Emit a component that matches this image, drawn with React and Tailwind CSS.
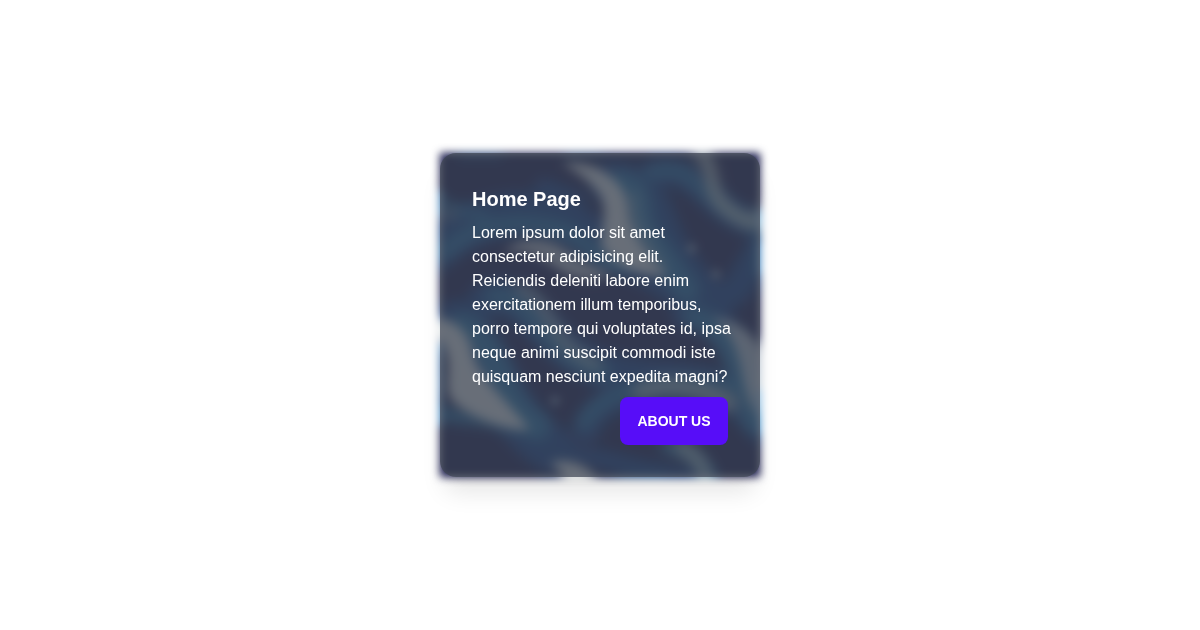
function WavesArt() {
  return (
    <svg
      viewBox="60 69 960 972"
      preserveAspectRatio="none"
      className="absolute inset-0 h-full w-full blur-xs"
      aria-hidden="true"
    >
      <defs>
        <filter id="soft" x="-20%" y="-20%" width="140%" height="140%">
          <feGaussianBlur stdDeviation="16" />
        </filter>
        <filter id="crest" x="-20%" y="-20%" width="140%" height="140%">
          <feGaussianBlur stdDeviation="11" />
        </filter>
        <clipPath id="frame">
          <rect x="60" y="69" width="960" height="972" />
        </clipPath>
      </defs>
      <g clipPath="url(#frame)">
        <rect x="60" y="69" width="960" height="972" fill="#131548" />

        {/* deep blue swells */}
        <g filter="url(#soft)" fill="none" stroke="#0a3a84" strokeLinecap="round">
          <path d="M30 370C160 250 330 210 480 300S700 400 860 520" strokeWidth="130" />
          <path d="M580 160C710 170 690 290 760 390S850 490 880 520" strokeWidth="130" />
          <path d="M700 130C850 100 860 260 1040 290" strokeWidth="80" />
          <path d="M200 510C330 460 360 660 560 720S830 700 1020 860" strokeWidth="110" />
          <path d="M110 580C230 660 230 860 400 960" strokeWidth="140" />
          <path d="M500 900C520 820 640 750 900 800" strokeWidth="80" />
          <path d="M800 550C930 560 1000 700 1030 900" strokeWidth="90" />
          <path d="M400 980C560 960 660 1050 860 1040" strokeWidth="60" />
          <path d="M950 480L1030 350" strokeWidth="90" />
          <path d="M370 170L470 210" strokeWidth="50" />
        </g>

        {/* brighter water */}
        <g filter="url(#soft)" fill="none" stroke="#1c70a8" strokeLinecap="round">
          <path d="M50 200C90 250 150 240 190 260" strokeWidth="26" />
          <path d="M70 370C160 280 270 270 390 290S510 400 620 410" strokeWidth="44" />
          <path d="M600 160C690 180 630 260 690 330S760 430 800 480" strokeWidth="74" />
          <path d="M690 130C850 80 820 240 1040 290" strokeWidth="34" />
          <path d="M220 500C340 480 340 660 550 730" strokeWidth="50" />
          <path d="M130 590C250 660 210 790 350 890" strokeWidth="80" />
          <path d="M490 880C540 800 650 750 850 760S950 870 1030 890" strokeWidth="40" />
          <path d="M820 560C930 590 950 700 1000 880" strokeWidth="60" />
          <path d="M60 850C150 870 210 860 300 890" strokeWidth="40" />
          <path d="M740 950C820 960 850 1000 870 1050" strokeWidth="40" />
          <path d="M1020 320V430" strokeWidth="24" />
          <path d="M120 70H240M440 65H540M600 1045H730" strokeWidth="16" />
        </g>

        {/* foam crests */}
        <g fill="#e6ecec" filter="url(#crest)">
          <path d="M425 98C550 90 630 170 626 250C635 310 680 370 745 440C660 438 580 410 545 350C540 290 575 230 530 180C500 145 470 125 425 98Z" />
          <path d="M250 370C290 325 350 320 410 345C450 370 490 400 580 435C510 465 440 445 390 400C340 370 310 360 250 370Z" opacity=".8" />
          <path d="M30 560C120 565 150 620 160 680C180 745 270 820 330 900C250 900 140 860 95 810C65 770 100 720 75 660C65 630 50 620 30 610Z" />
          <path d="M875 560C975 575 1010 630 1050 690V890C1000 860 975 790 965 720C950 650 930 600 875 560Z" opacity=".8" />
          <path d="M390 1000C440 980 510 1005 540 1060H440C430 1030 410 1015 390 1000Z" />
        </g>
        <g fill="none" stroke="#b8c8c8" strokeLinecap="round" filter="url(#soft)">
          <path d="M825 50C900 110 850 180 920 235S990 270 1040 280" strokeWidth="36" />
          <path d="M300 475C400 520 380 640 530 705" strokeWidth="32" opacity=".75" />
          <path d="M660 785C740 755 830 765 930 820" strokeWidth="46" opacity=".85" />
          <path d="M780 950C830 970 850 1010 860 1050" strokeWidth="36" opacity=".9" />
          <path d="M640 200C630 290 690 340 720 410" strokeWidth="34" opacity=".4" />
          <path d="M55 255H100" strokeWidth="20" opacity=".6" />
          <path d="M1020 230V270" strokeWidth="18" />
        </g>

        {/* light on the side edges */}
        <g fill="none" stroke="#4aa9f0" strokeWidth="10">
          <path d="M62 180V260M62 640V890M1018 240V290M1018 340V430M1018 780V910" />
        </g>

        {/* stars */}
        <g fill="#5a6d94">
          <circle cx="815" cy="355" r="17" />
          <circle cx="888" cy="432" r="16" />
          <circle cx="405" cy="812" r="16" />
        </g>
      </g>
    </svg>
  )
}

export default function App() {
  return (
    <main className="flex min-h-screen items-center justify-center bg-white font-['Liberation_Sans',Arial,sans-serif]">
      <div className="relative w-80 rounded-2xl shadow-xl">
        <WavesArt />
        <div className="absolute inset-0 rounded-2xl bg-[#3d4451]/75" />
        <div className="relative flex flex-col gap-2 p-8 text-white">
          <h2 className="text-xl font-semibold">Home Page</h2>
          <p className="-mr-2 text-base">
            Lorem ipsum dolor sit amet consectetur adipisicing elit. Reiciendis deleniti labore
            enim exercitationem illum temporibus, porro tempore qui voluptates id, ipsa neque animi
            suscipit commodi iste quisquam nesciunt expedita magni?
          </p>
          <div className="flex justify-end">
            <button
              type="button"
              className="h-12 w-27 cursor-pointer rounded-lg bg-[#570df8] text-sm font-semibold uppercase transition-colors hover:bg-[#4506cb]"
            >
              About us
            </button>
          </div>
        </div>
      </div>
    </main>
  )
}
